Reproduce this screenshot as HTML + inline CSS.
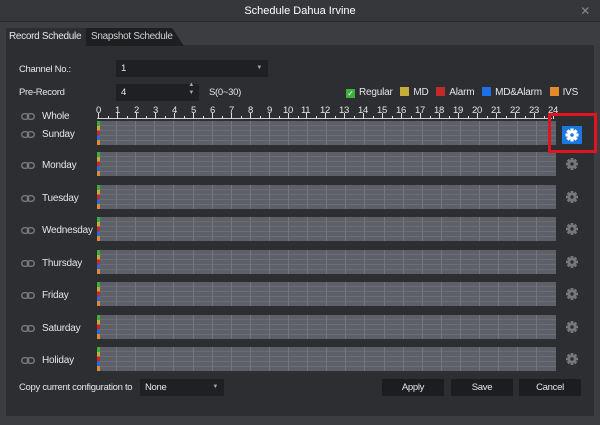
<!DOCTYPE html>
<html><head><style>
*{margin:0;padding:0;box-sizing:border-box}
body{width:600px;height:425px;background:#3b3d41;font-family:"Liberation Sans",sans-serif;font-size:9.5px;letter-spacing:-0.3px;color:#e6e6e6;position:relative;overflow:hidden;white-space:nowrap}
.a{position:absolute}
.title{left:0;top:0;width:600px;height:22px;background:#35373b;border-bottom:1px solid #26282b;text-align:center;line-height:22px;font-size:11px;color:#fff;letter-spacing:0}
.panel{left:6px;top:45px;width:588px;height:371px;background:#2c2e32}
.tab1{left:6px;top:28px;width:80px;height:18px;background:#2c2e32;line-height:18px;padding-left:3px;font-size:10px}
.tab2{left:86px;top:28px;width:98px;height:18px;background:#1e1f22;line-height:18px;padding-left:5px;color:#cfcfcf;font-size:10px;clip-path:polygon(0 0,88% 0,100% 100%,0 100%)}
.inp{background:#1f2024;height:17px;line-height:17px;padding-left:5px}
.bar{left:97px;width:459px;height:24px;background-color:#5d6068;
background-image:repeating-linear-gradient(0deg,transparent 0 4px,#6a6d74 4px 5px)}
.vl{width:1px;height:24px;background:#72757c}
.strip{left:97px;width:3px;height:24px;background:linear-gradient(#3bb03b 0 20%,#c8ac3a 20% 40%,#c42a2a 40% 60%,#1e6fe6 60% 80%,#e58a2a 80%)}
.lbl{left:42px;font-size:10px;letter-spacing:-0.2px}
.lnk{left:21px;width:14px;height:7px}
.gear{left:565px;width:14px;height:14px}
.btn{top:379px;height:17px;background:#1c1d20;text-align:center;line-height:17px;width:62px}
.lg{width:9px;height:9px;display:inline-block;vertical-align:-1px;margin-right:4px}
</style></head><body>
<div class="a title">Schedule Dahua Irvine</div>
<div class="a" style="right:10px;top:4px;color:#888;font-size:12px">✕</div>
<div class="a panel"></div>
<div class="a tab1">Record Schedule</div>
<div class="a tab2">Snapshot Schedule</div>
<div class="a" style="left:19px;top:64px">Channel No.:</div>
<div class="a inp" style="left:116px;top:60px;width:152px">1<span style="position:absolute;right:6px;font-size:6px;color:#aaa">▼</span></div>
<div class="a" style="left:19px;top:87px">Pre-Record</div>
<div class="a inp" style="left:116px;top:84px;width:83px">4<span style="position:absolute;right:5px;top:-3px;font-size:6px;color:#aaa;line-height:8px">▲<br>▼</span></div>
<div class="a" style="left:209px;top:87px">S(0~30)</div>
<div class="a" style="left:346px;top:87px;font-size:10px;letter-spacing:-0.2px">
<span class="lg" style="background:#3bb03b;color:#fff;font-size:8px;line-height:9px;text-align:center">✓</span>Regular&nbsp;&nbsp;
<span class="lg" style="background:#c8ac3a"></span>MD&nbsp;&nbsp;
<span class="lg" style="background:#c42a2a"></span>Alarm&nbsp;&nbsp;
<span class="lg" style="background:#1e6fe6"></span>MD&amp;Alarm&nbsp;&nbsp;
<span class="lg" style="background:#e58a2a"></span>IVS</div>
<div class="a" style="left:97px;top:118px;width:455px;height:1px;background:#cfcfcf"></div>
<div id="ax"></div>
<div id="rows"></div>
<div class="a" style="left:548px;top:113px;width:49px;height:40px;border:3px solid #e0141e"></div>
<div class="a" style="left:562px;top:126px;width:20px;height:18px;background:#1a78e0"></div>
<svg class="a" style="left:565px;top:128px" width="14" height="14" viewBox="-7 -7 14 14"><g fill="#fff"><circle r="4.6"/><rect x="-1.6" y="-6.5" width="3.2" height="13"/><rect x="-1.6" y="-6.5" width="3.2" height="13" transform="rotate(45)"/><rect x="-1.6" y="-6.5" width="3.2" height="13" transform="rotate(90)"/><rect x="-1.6" y="-6.5" width="3.2" height="13" transform="rotate(135)"/></g><circle r="1.8" fill="#1a78e0"/></svg>
<div class="a" style="left:19px;top:382px">Copy current configuration to</div>
<div class="a inp" style="left:140px;top:379px;width:84px">None<span style="position:absolute;right:6px;font-size:6px;color:#aaa">▼</span></div>
<div class="a btn" style="left:382px">Apply</div>
<div class="a btn" style="left:451px">Save</div>
<div class="a btn" style="left:519px">Cancel</div>
<script>
var h='';
for(var i=0;i<=24;i++){var x=Math.round(98+i*18.95);h+='<div class="a" style="left:'+(x-(i>9?5:2))+'px;top:105px;font-size:9.5px">'+i+'</div>';h+='<div class="a" style="left:'+x+'px;top:113px;width:1px;height:6px;background:#ddd"></div>';if(i<24)h+='<div class="a" style="left:'+Math.round(x+9.5)+'px;top:116px;width:1px;height:3px;background:#ddd"></div>';}
document.getElementById('ax').innerHTML=h;
var d=['Whole','Sunday','Monday','Tuesday','Wednesday','Thursday','Friday','Saturday','Holiday'];var r='';
var link='<rect x="0.7" y="0.7" width="7" height="5.6" rx="2.8" fill="none" stroke="#777a80" stroke-width="1.4"/><rect x="6.3" y="0.7" width="7" height="5.6" rx="2.8" fill="none" stroke="#777a80" stroke-width="1.4"/>';
var gear='<g fill="#75787d"><circle r="4.2"/><rect x="-1.4" y="-6" width="2.8" height="12"/><rect x="-1.4" y="-6" width="2.8" height="12" transform="rotate(45)"/><rect x="-1.4" y="-6" width="2.8" height="12" transform="rotate(90)"/><rect x="-1.4" y="-6" width="2.8" height="12" transform="rotate(135)"/></g><circle r="1.7" fill="#2c2e32"/>';
r+='<div class="a lbl" style="top:111px">Whole</div><svg class="a lnk" style="top:113px" viewBox="0 0 14 7">'+link+'</svg>';
for(var j=1;j<9;j++){var y=j==1?121:152+(j-2)*32.5;
r+='<div class="a bar" style="top:'+y+'px"></div>';
for(var k=1;k<24;k++)r+='<div class="a vl" style="left:'+Math.round(97+k*19.1)+'px;top:'+y+'px"></div>';
r+='<div class="a strip" style="top:'+y+'px"></div>';
r+='<div class="a lbl" style="top:'+(y+8)+'px">'+d[j]+'</div>';
r+='<svg class="a lnk" style="top:'+(y+10)+'px" viewBox="0 0 14 7">'+link+'</svg>';
if(j>1)r+='<svg class="a gear" style="top:'+(y+5)+'px" viewBox="-7 -7 14 14">'+gear+'</svg>';}
document.getElementById('rows').innerHTML=r;
</script>
</body></html>
